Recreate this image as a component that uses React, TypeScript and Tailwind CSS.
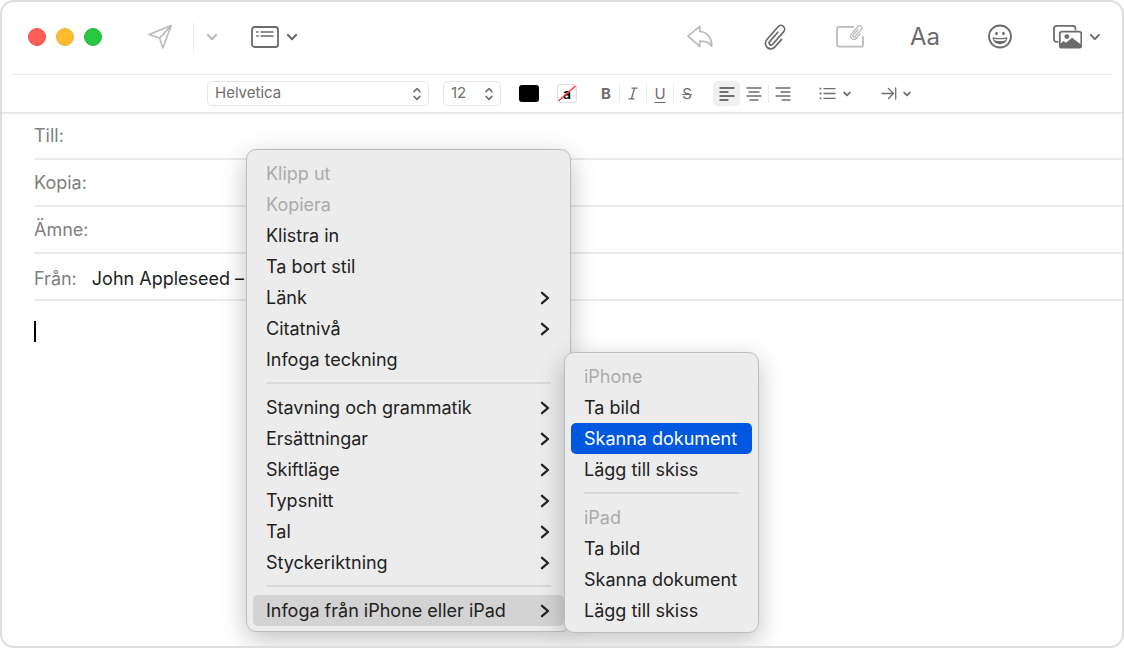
import type { ReactNode } from "react";

type Entry = {
  label: string;
  state?: "disabled" | "open" | "selected";
  submenu?: boolean;
};

const contextGroups: Entry[][] = [
  [
    { label: "Klipp ut", state: "disabled" },
    { label: "Kopiera", state: "disabled" },
    { label: "Klistra in" },
    { label: "Ta bort stil" },
    { label: "Länk", submenu: true },
    { label: "Citatnivå", submenu: true },
    { label: "Infoga teckning" },
  ],
  [
    { label: "Stavning och grammatik", submenu: true },
    { label: "Ersättningar", submenu: true },
    { label: "Skiftläge", submenu: true },
    { label: "Typsnitt", submenu: true },
    { label: "Tal", submenu: true },
    { label: "Styckeriktning", submenu: true },
  ],
  [{ label: "Infoga från iPhone eller iPad", submenu: true, state: "open" }],
];

const deviceGroups: Entry[][] = [
  [
    { label: "iPhone", state: "disabled" },
    { label: "Ta bild" },
    { label: "Skanna dokument", state: "selected" },
    { label: "Lägg till skiss" },
  ],
  [
    { label: "iPad", state: "disabled" },
    { label: "Ta bild" },
    { label: "Skanna dokument" },
    { label: "Lägg till skiss" },
  ],
];

function rowColors(state: Entry["state"]) {
  if (state === "disabled") return "text-[#ababab]";
  if (state === "open") return "bg-[#d3d3d3] text-[#222222]";
  if (state === "selected") return "bg-[#0058e1] text-white";
  return "text-[#222222]";
}

function Menu({ label, groups, className }: { label: string; groups: Entry[][]; className: string }) {
  return (
    <div
      role="menu"
      aria-label={label}
      className={
        "absolute rounded-[10px] border border-[#bdbdbd] bg-[#ececec] px-[6px] shadow-[0_8px_26px_rgba(0,0,0,0.24)] " +
        className
      }
    >
      {groups.map((group, index) => (
        <div key={index} role="group">
          {index > 0 && (
            <div className="flex h-[17px] items-start px-[13px] pt-[7px]">
              <hr className="h-[2px] w-full border-0 bg-[#d9d9d9]" />
            </div>
          )}
          {group.map((entry) => (
            <button
              key={entry.label}
              type="button"
              role="menuitem"
              disabled={entry.state === "disabled"}
              aria-haspopup={entry.submenu ? "menu" : undefined}
              className={
                "flex h-[31px] w-full items-center justify-between rounded-[5px] px-[13px] text-left text-[18px] whitespace-nowrap " +
                rowColors(entry.state)
              }
            >
              {entry.label}
              {entry.submenu && (
                <svg width="12" height="14" viewBox="0 0 12 14" fill="none" stroke="#222" strokeWidth="2.3" strokeLinecap="round" strokeLinejoin="round" aria-hidden="true">
                  <path d="M3 1.8 9 7l-6 5.2" />
                </svg>
              )}
            </button>
          ))}
        </div>
      ))}
    </div>
  );
}

function Chevron({ small = false }: { small?: boolean }) {
  return (
    <svg width={small ? 8 : 12} height={small ? 6 : 8} viewBox="0 0 12 8" fill="none" stroke="currentColor" strokeWidth={small ? 2.6 : 2} strokeLinecap="round" strokeLinejoin="round" aria-hidden="true">
      <path d="m1.8 1.8 4.2 4.4 4.2-4.4" />
    </svg>
  );
}

function Stepper() {
  return (
    <svg className="pointer-events-none col-start-1 row-start-1 mr-[7px] self-center justify-self-end" width="10" height="14" viewBox="0 0 10 14" fill="none" stroke="#6e6e6e" strokeWidth="1.5" strokeLinecap="round" strokeLinejoin="round" aria-hidden="true">
      <path d="m2 4.6 3-3 3 3M2 9.4l3 3 3-3" />
    </svg>
  );
}

function ToolButton({ label, children, className = "w-11" }: { label: string; children: ReactNode; className?: string }) {
  return (
    <button type="button" aria-label={label} className={"flex h-8 shrink-0 items-center justify-center " + className}>
      {children}
    </button>
  );
}

function Lines({ rows }: { rows: [number, number][] }) {
  return (
    <svg width="16" height="14" viewBox="0 0 16 14" stroke="currentColor" strokeWidth="1.3" strokeLinecap="round" aria-hidden="true">
      {rows.map(([start, end], i) => (
        <path key={i} d={`M${start} ${1 + i * 4}H${end}`} />
      ))}
    </svg>
  );
}

const clipPath = "M6-2V8.5a5.7 5.7 0 0 1-11.4 0V-9.5a3.9 3.9 0 0 1 7.8 0V8a2.1 2.1 0 0 1-4.2 0V-5";

function TopBar() {
  return (
    <header className="flex h-[72px] items-center pb-[3px] pl-[26px] pr-[21px] text-[#6b6b6b]">
      <div className="flex gap-[10px]">
        <button type="button" aria-label="Stäng" className="size-[18px] rounded-full border border-[#ee5048] bg-[#ff5f57]" />
        <button type="button" aria-label="Minimera" className="size-[18px] rounded-full border border-[#efaf2b] bg-[#febc2e]" />
        <button type="button" aria-label="Zooma" className="size-[18px] rounded-full border border-[#23b83b] bg-[#28c840]" />
      </div>
      <ToolButton label="Skicka" className="ml-[46px] w-6 text-[#bababa]">
        <svg width="24" height="26" viewBox="0 0 24 26" fill="none" stroke="currentColor" strokeWidth="1.6" strokeLinejoin="round" aria-hidden="true">
          <path d="M23.2 1.6 1 10.6l10.6 3.5L14.8 24ZM23.2 1.6 11.6 14.1" />
        </svg>
      </ToolButton>
      <div className="ml-[21px] h-7 w-px bg-[#e6e6e6]" />
      <ToolButton label="Skicka senare" className="ml-3 w-3 text-[#bababa]">
        <Chevron />
      </ToolButton>
      <ToolButton label="Rubrikfält" className="ml-[33px] gap-[7px]">
        <svg width="28" height="22" viewBox="0 0 28 22" fill="none" stroke="currentColor" aria-hidden="true">
          <rect x="1" y="1" width="26" height="20" rx="2.6" strokeWidth="1.8" />
          <path d="M5.2 6h2.4M5.2 10h2.4M9.6 6h13M9.6 10h13" strokeWidth="1.4" />
        </svg>
        <Chevron />
      </ToolButton>

      <div className="ml-auto flex items-center gap-[31px]">
        <ToolButton label="Svara">
          <svg width="26" height="23" viewBox="0 0 26 23" fill="none" stroke="#bababa" strokeWidth="1.7" strokeLinejoin="round" aria-hidden="true">
            <path d="M12.7 1.3 1 11.2l11.7 10.2v-5.3c6 0 9.2.9 12 5.2.3-8.2-4-14.4-12-14.8Z" />
          </svg>
        </ToolButton>
        <ToolButton label="Bifoga">
          <svg width="26" height="28" viewBox="-14 -14 26 28" fill="none" stroke="currentColor" strokeWidth="1.8" strokeLinecap="round" aria-hidden="true">
            <path transform="rotate(41) scale(.96)" d={clipPath} />
          </svg>
        </ToolButton>
        <ToolButton label="Anteckning med bilaga">
          <svg width="30" height="26" viewBox="0 0 30 26" fill="none" stroke="#bababa" strokeLinecap="round" aria-hidden="true">
            <path strokeWidth="1.8" d="M18.5 2.8H4.2A2.2 2.2 0 0 0 2 5v15.400a2.200 2.200 0 0 0 2.200 2.200h21.600a2.200 2.200 0 0 0 2.200-2.200V13" />
            <path transform="translate(21.8 8.500) rotate(41) scale(.56)" strokeWidth="2.300" d={clipPath} />
          </svg>
        </ToolButton>
        <button type="button" aria-label="Format" className="h-8 w-11 text-[24px] leading-8">
          Aa
        </button>
        <ToolButton label="Emoji">
          <svg width="26" height="26" viewBox="0 0 26 26" fill="none" aria-hidden="true">
            <circle cx="13" cy="12.5" r="11" stroke="currentColor" strokeWidth="1.8" />
            <ellipse cx="9.5" cy="9.5" rx="1.300" ry="1.700" fill="currentColor" />
            <ellipse cx="16.5" cy="9.5" rx="1.300" ry="1.700" fill="currentColor" />
            <path d="M5.600 13.300c2.400 1 12.400 1 14.800 0 0 3.900-3.300 6.900-7.400 6.900s-7.400-3-7.400-6.900Z" fill="currentColor" />
            <path d="M7 14.700c3 .8 9 .8 12 0-.2.9-.5 1.300-.9 1.800-3.100.8-7.100.8-10.200 0-.4-.5-.7-.9-.9-1.800Z" fill="#fff" />
          </svg>
        </ToolButton>
        <ToolButton label="Bildbläddrare" className="w-12 gap-[7px]">
          <svg width="30" height="26" viewBox="0 0 30 26" fill="none" aria-hidden="true">
            <rect x="1" y="1.5" width="22" height="16.5" rx="2.6" stroke="currentColor" strokeWidth="1.8" />
            <rect x="5.5" y="6" width="24.5" height="20" rx="3" fill="#fff" />
            <rect x="7" y="7.500" width="22" height="16.500" rx="2.400" stroke="currentColor" strokeWidth="1.800" fill="#fff" />
            <circle cx="14.200" cy="12.600" r="2.500" fill="currentColor" />
            <path d="M7 20.500 10.800 17l2.500 2 6.200-5.200L29 21v1.500a1.800 1.800 0 0 1-1.800 1.800H8.800A1.800 1.800 0 0 1 7 22.500Z" fill="currentColor" />
          </svg>
          <Chevron />
        </ToolButton>
      </div>
    </header>
  );
}

function Rule() {
  return <div className="h-[18px] w-px bg-[#ebebeb]" />;
}

const fieldSelect =
  "col-start-1 row-start-1 h-[25px] w-full appearance-none rounded-[5px] border border-[#e6e6e6] bg-white pb-[2px] pl-[7px] text-[15px] leading-[18px] text-[#6e6e6e]";

function FormatBar() {
  const styleButton = "h-[25px] w-[26px] text-[15px] leading-[25px]";
  return (
    <div role="toolbar" aria-label="Textformat" className="flex h-[37px] items-center pl-[205px] text-[#6e6e6e]">
      <label className="grid w-[222px]">
        <span className="sr-only">Typsnitt</span>
        <select className={fieldSelect}>
          <option>Helvetica</option>
        </select>
        <Stepper />
      </label>
      <label className="ml-[14px] grid w-[58px]">
        <span className="sr-only">Storlek</span>
        <select className={fieldSelect}>
          <option>12</option>
        </select>
        <Stepper />
      </label>
      <button type="button" aria-label="Textfärg" className="ml-[18px] h-[17px] w-5 rounded-[3px] bg-black" />
      <button type="button" aria-label="Bakgrundsfärg" className="ml-[18px] grid h-[19px] w-5 place-items-center rounded-[3px] border border-[#dedede] text-[14px] leading-4 font-semibold text-black">
        <span className="col-start-1 row-start-1">a</span>
        <svg className="col-start-1 row-start-1" width="18" height="17" viewBox="0 0 18 17" stroke="#fb3b30" strokeWidth="1.5" aria-hidden="true">
          <path d="M.5 16 17.5 1" />
        </svg>
      </button>
      <div className="ml-4 flex items-center pb-px">
        <button type="button" aria-label="Fet" className={styleButton + " font-bold"}>B</button>
        <Rule />
        <button type="button" aria-label="Kursiv" className={styleButton}>
          <svg className="mx-auto" width="10" height="13" viewBox="0 0 10 13" fill="none" stroke="currentColor" strokeWidth="1.3" aria-hidden="true">
            <path d="M3.5 1.2H9.500M.5 11.800h6M6.500 1.200l-3 10.600" />
          </svg>
        </button>
        <Rule />
        <button type="button" aria-label="Understruken" className={styleButton + " underline decoration-1 underline-offset-[3px]"}>U</button>
        <Rule />
        <button type="button" aria-label="Genomstruken" className={styleButton + " line-through decoration-1"}>S</button>
      </div>
      <div className="ml-[13px] flex items-center">
        <ToolButton label="Vänsterjustera" className="max-h-[25px] w-[27px] rounded-[5px] bg-[#f0f0f0] text-[#444444]">
          <Lines rows={[[1, 15], [1, 9], [1, 15], [1, 9]]} />
        </ToolButton>
        <ToolButton label="Centrera" className="w-7">
          <Lines rows={[[1, 15], [3, 13], [1, 15], [4, 12]]} />
        </ToolButton>
        <Rule />
        <ToolButton label="Högerjustera" className="w-7">
          <Lines rows={[[1, 15], [6, 15], [1, 15], [7, 15]]} />
        </ToolButton>
      </div>
      <ToolButton label="Lista" className="ml-[22px] w-8 gap-[7px]">
        <svg width="17" height="13" viewBox="0 0 17 13" fill="none" stroke="currentColor" strokeWidth="1.3" aria-hidden="true">
          <path d="M4.5 1.7H16.5M4.5 6.500H16.500M4.500 11.300H16.500" />
          <path d="M.6 1.700h1.800M.6 6.500h1.800M.6 11.300h1.800" strokeWidth="1.8" />
        </svg>
        <Chevron small />
      </ToolButton>
      <ToolButton label="Indrag" className="ml-[30px] w-[30px] gap-[6px]">
        <svg width="16" height="13" viewBox="0 0 16 13" fill="none" stroke="currentColor" strokeWidth="1.3" strokeLinecap="round" strokeLinejoin="round" aria-hidden="true">
          <path d="M1 6.500h11.500M7.500 1.500l5 5-5 5M14.700 1v11" />
        </svg>
        <Chevron small />
      </ToolButton>
    </div>
  );
}

function Field({ id, label }: { id: string; label: string }) {
  return (
    <div className="flex h-[47px] items-center border-b-2 border-[#ebebeb]">
      <label htmlFor={id} className="text-[#808080]">{label}</label>
      <input id={id} type="text" className="ml-4 min-w-0 flex-1 outline-none" />
    </div>
  );
}

export default function App() {
  return (
    <div className="relative flex min-h-screen flex-col overflow-hidden rounded-[14px] border-2 border-[#dedede] bg-white font-['Inter','Liberation_Sans',sans-serif]">
      <TopBar />
      <hr className="mx-[10px] border-[#ebebeb]" />
      <FormatBar />
      <hr className="border-t-2 border-[#e8e8e8]" />

      <main className="flex flex-1 flex-col pl-8 text-[18px]">
        <div className="-mt-px">
          <Field id="to" label="Till:" />
          <Field id="cc" label="Kopia:" />
          <Field id="subject" label="Ämne:" />
          <div className="flex h-[47px] items-center border-b-2 border-[#ebebeb] pt-1">
            <label htmlFor="from" className="text-[#808080]">Från:</label>
            <select id="from" className="ml-[15px] flex-1 appearance-none bg-white text-[#1c1c1c] outline-none">
              <option>John Appleseed –</option>
            </select>
          </div>
        </div>
        <div className="flex flex-1 pt-5">
          <span className="h-[21px] w-[2px] bg-black" aria-hidden="true" />
          <textarea aria-label="Meddelande" className="flex-1 resize-none bg-transparent outline-none" />
        </div>
      </main>

      <Menu label="Redigera" groups={contextGroups} className="left-[244px] top-[147px] w-[325px] pt-2 pb-[5px]" />
      <Menu label="Infoga från enhet" groups={deviceGroups} className="left-[562px] top-[350px] w-[195px] pt-2 pb-[6px]" />
    </div>
  );
}
